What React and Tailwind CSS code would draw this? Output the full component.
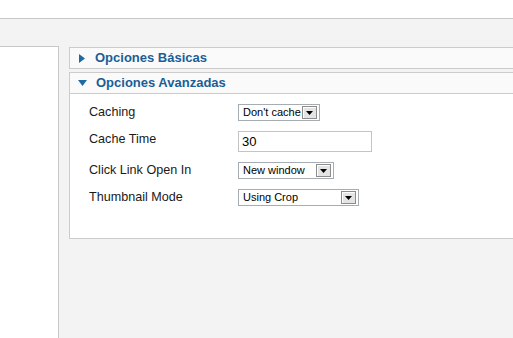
import React from "react";

function SelectBox({ label, width }) {
  return (
    <div
      className="flex h-[17px] items-center justify-between border border-[#a5acb2] bg-white pl-[4px] pr-[2px]"
      style={{ width }}
    >
      <span className="text-[11px] leading-[15px] text-black">{label}</span>
      <span className="flex h-[13px] w-[15px] items-center justify-center border border-[#8c8c8c] bg-[#e4e4e4] shadow-[inset_1px_1px_0_#fff]">
        <svg width="7" height="4" viewBox="0 0 7 4">
          <path d="M0 0H7L3.5 4Z" fill="#000" />
        </svg>
      </span>
    </div>
  );
}

export default function App() {
  return (
    <div
      className="h-[338px] w-[513px] overflow-hidden bg-white"
      style={{ fontFamily: '"Liberation Sans", Arial, sans-serif' }}
    >
      <div className="h-[18px] bg-white" />
      <div className="flex h-[320px] border-t border-[#c8c8c8] bg-[#f3f3f3] pt-[27px]">
        <div className="w-[59px] shrink-0 border-r border-t border-[#c8c8c8] bg-white" />
        <div className="ml-[10px] mt-[1px] w-[460px] shrink-0">
          <div className="flex h-[22px] items-center border border-[#cccccc] bg-[#fafafa] pl-[9px]">
            <svg width="6" height="9" viewBox="0 0 6 9" className="mr-[10px]">
              <path d="M0 0L6 4.5L0 9Z" fill="#1e6aa5" />
            </svg>
            <span className="text-[13px] font-bold text-[#1a5e97]">Opciones Básicas</span>
          </div>
          <div className="mt-[3px] border border-[#cccccc] bg-white">
            <div className="flex h-[21px] items-center border-b border-[#cccccc] bg-[#fafafa] pl-[8px]">
              <svg width="9" height="6" viewBox="0 0 9 6" className="mr-[9px]">
                <path d="M0 0H9L4.5 6Z" fill="#1e6aa5" />
              </svg>
              <span className="text-[13px] font-bold text-[#1a5e97]">Opciones Avanzadas</span>
            </div>
            <div className="h-[144px] pl-[19px] pt-[10px] text-[12.6px] text-[#1a1a1a]">
              <div className="flex h-[17px] items-center">
                <span className="w-[149px] -mt-[1px]">Caching</span>
                <SelectBox label="Don't cache" width={82} />
              </div>
              <div className="mt-[10px] flex h-[21px] items-center">
                <span className="w-[149px] -mt-[4px]">Cache Time</span>
                <div className="flex h-[21px] w-[134px] items-center border border-[#c4c4c4] bg-white pl-[3px] text-[13px] text-black">
                  30
                </div>
              </div>
              <div className="mt-[10px] flex h-[17px] items-center">
                <span className="w-[149px]">Click Link Open In</span>
                <SelectBox label="New window" width={96} />
              </div>
              <div className="mt-[10px] flex h-[17px] items-center">
                <span className="w-[149px] -mt-[1px]">Thumbnail Mode</span>
                <SelectBox label="Using Crop" width={121} />
              </div>
            </div>
          </div>
        </div>
      </div>
    </div>
  );
}
